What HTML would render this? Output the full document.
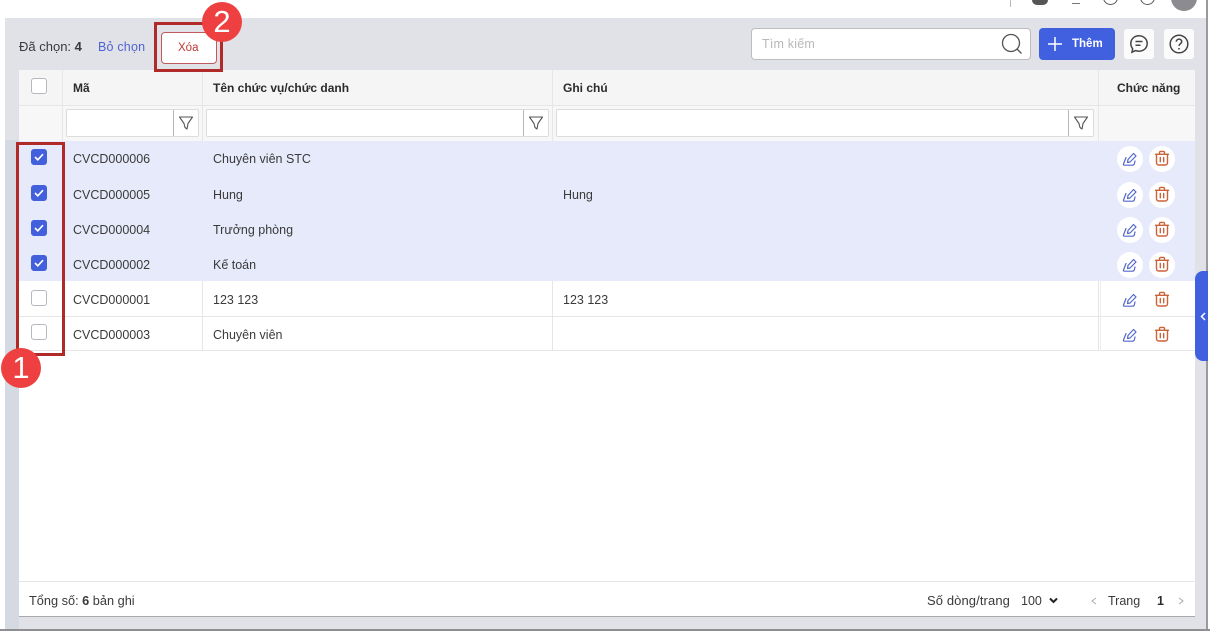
<!DOCTYPE html>
<html><head><meta charset="utf-8">
<style>
*{box-sizing:border-box}
html,body{margin:0;padding:0;width:1210px;height:631px;overflow:hidden;background:#fff;font-family:"Liberation Sans","Noto Sans CJK SC",sans-serif;font-size:12.5px;color:#3a3a3a}
.a{position:absolute}
.t{position:absolute;white-space:nowrap;line-height:16px}
.b{font-weight:700;color:#2b2b2b}
.hd{font-size:12px}
.cb{position:absolute;left:31px;width:16px;height:16px;border:1px solid #b5b8be;border-radius:3px;background:#fff}
.cb.on{background:#4360dc;border-color:#4360dc}
.cb.on svg{position:absolute;left:2px;top:3px}
.row{position:absolute;left:19px;width:1176px}
.sel{background:#e7eafa}
.v{position:absolute;width:1px;background:#e6e6e6}
.h{position:absolute;height:1px;background:#e6e6e6}
.inp{position:absolute;top:109px;height:28px;background:#fff;border:1px solid #dcdcdc;border-radius:2px}
.inp i{position:absolute;right:24px;top:0;bottom:0;width:1px;background:#b5b5b5}
.inp svg{position:absolute;right:4px;top:5px}
.circ{position:absolute;width:26px;height:26px;border-radius:50%;background:#fff}
.ic{position:absolute}
.red{position:absolute;border:3px solid #b02a2a}
.num{position:absolute;border-radius:50%;background:#ee4040;color:#fff;text-align:center;font-size:31px;width:40px;height:40px;line-height:40px}
</style></head><body>
<!-- top bar remnants -->
<div class="a" style="left:1010px;top:0;width:1px;height:7px;background:#bbb"></div>
<div class="a" style="left:1032px;top:0;width:16px;height:5px;background:#555;border-radius:0 0 8px 8px"></div>
<div class="a" style="left:1072px;top:0;width:8px;height:4px;border-bottom:1px solid #777"></div>
<div class="a" style="left:1103px;top:-10px;width:15px;height:15px;border:1.5px solid #555;border-radius:50%"></div>
<div class="a" style="left:1140px;top:-10px;width:15px;height:15px;border:1.5px solid #555;border-radius:50%"></div>
<div class="a" style="left:1171px;top:-15px;width:26px;height:26px;background:#8c8c90;border-radius:50%"></div>

<!-- gray area -->
<div class="a" style="left:5px;top:18px;width:1203px;height:611px;background:#e0e2e8"></div>
<div class="a" style="left:5px;top:140px;width:14px;height:489px;background:#d5d9e2"></div>
<div class="a" style="left:1206px;top:0;width:2px;height:631px;background:#9a9a9e"></div>
<div class="a" style="left:0;top:629px;width:1210px;height:2px;background:#8f8f92"></div>

<!-- toolbar -->
<div class="t" style="left:19px;top:39px;font-size:13px">Đã chọn: <b>4</b></div>
<div class="t" style="left:98px;top:39px;font-size:12.5px;letter-spacing:.2px;color:#4f63cf">Bỏ chọn</div>
<div class="a" style="left:161px;top:32px;width:56px;height:32px;background:#fff;border:1px solid #c05a5a;border-radius:4px"></div>
<div class="t" style="left:178px;top:40px;font-size:11.5px;color:#c0392f">Xóa</div>

<div class="a" style="left:751px;top:28px;width:280px;height:32px;background:#fff;border:1px solid #bdbdbd;border-radius:4px"></div>
<div class="t" style="left:762px;top:36px;font-size:12.5px;letter-spacing:.2px;color:#b8b8b8">Tìm kiếm</div>
<svg class="ic" style="left:1000px;top:32px" width="24" height="24" viewBox="0 0 24 24" fill="none" stroke="#555" stroke-width="1.300"><circle cx="11" cy="11" r="8.500"/><path d="M17 17l4.500 4.500"/></svg>
<div class="a" style="left:1039px;top:28px;width:76px;height:32px;background:#4160e0;border-radius:4px"></div>
<svg class="ic" style="left:1047px;top:36px" width="16" height="16" viewBox="0 0 16 16" stroke="#fff" stroke-width="1.500"><path d="M8 1v14M1 8h14"/></svg>
<div class="t b" style="left:1072px;top:36px;font-size:11.500px;color:#fff">Thêm</div>
<div class="a" style="left:1124px;top:29px;width:30px;height:30px;background:#fbfbfc;border-radius:3px"></div>
<svg class="ic" style="left:1129px;top:34px" width="20" height="20" viewBox="0 0 20 20" fill="none" stroke="#444" stroke-width="1.500"><path d="M10 1.800c4.700 0 8.200 3.300 8.200 7.700s-3.500 7.700-8.200 7.700c-1.200 0-2.400-.2-3.400-.6L3 18.200l.7-3.400C2.500 13.300 1.800 11.500 1.800 9.500 1.800 5.100 5.300 1.800 10 1.800z"/><path d="M6.500 7.500h7M6.500 11.300h5"/></svg>
<div class="a" style="left:1164px;top:29px;width:30px;height:30px;background:#fbfbfc;border-radius:3px"></div>
<svg class="ic" style="left:1169px;top:34px" width="20" height="20" viewBox="0 0 20 20" fill="none" stroke="#444" stroke-width="1.500"><circle cx="10" cy="10" r="8.800"/><path d="M7.300 7.800c0-1.600 1.200-2.700 2.700-2.700s2.700 1 2.700 2.500c0 2.200-2.700 2.300-2.700 4.300"/><path d="M10 14v1.500" stroke-width="1.600"/></svg>

<!-- table panel -->
<div class="a" style="left:19px;top:70px;width:1176px;height:547px;background:#fff;border-bottom:1px solid #aaa"></div>
<div class="a" style="left:19px;top:70px;width:1176px;height:35px;background:#f5f5f5"></div>
<div class="a" style="left:19px;top:106px;width:1176px;height:35px;background:#f7f7f7"></div>
<div class="h" style="left:19px;top:105px;width:1176px"></div>

<div class="row sel" style="top:141px;height:140px"></div>
<div class="h" style="left:19px;top:316px;width:1176px"></div>
<div class="h" style="left:19px;top:350px;width:1176px"></div>
<div class="h" style="left:19px;top:581px;width:1176px"></div>

<div class="v" style="left:62px;top:70px;height:71px"></div>
<div class="v" style="left:202px;top:70px;height:71px"></div>
<div class="v" style="left:552px;top:70px;height:71px"></div>
<div class="v" style="left:1098px;top:70px;height:71px"></div>
<div class="v" style="left:202px;top:281px;height:70px"></div>
<div class="v" style="left:552px;top:281px;height:70px"></div>
<div class="v" style="left:1098px;top:281px;height:70px"></div>
<div class="v" style="left:1100px;top:281px;height:70px;background:#eee"></div>

<!-- header -->
<div class="cb" style="top:78px"></div>
<div class="t b hd" style="left:73px;top:80px">Mã</div>
<div class="t b hd" style="left:213px;top:80px">Tên chức vụ/chức danh</div>
<div class="t b hd" style="left:563px;top:80px">Ghi chú</div>
<div class="t b hd" style="left:1117px;top:80px">Chức năng</div>

<!-- filters -->
<div class="inp" style="left:66px;width:133px"><i></i><svg width="16" height="16" viewBox="0 0 16 16" fill="none" stroke="#555" stroke-width="1.100"><path d="M1.500 2h13L10 8.500 9 14 7 12.500 6 8.500z" stroke-linejoin="round"/></svg></div>
<div class="inp" style="left:206px;width:343px"><i></i><svg width="16" height="16" viewBox="0 0 16 16" fill="none" stroke="#555" stroke-width="1.100"><path d="M1.500 2h13L10 8.500 9 14 7 12.500 6 8.500z" stroke-linejoin="round"/></svg></div>
<div class="inp" style="left:556px;width:538px"><i></i><svg width="16" height="16" viewBox="0 0 16 16" fill="none" stroke="#555" stroke-width="1.100"><path d="M1.500 2h13L10 8.500 9 14 7 12.500 6 8.500z" stroke-linejoin="round"/></svg></div>

<!-- checkboxes -->
<div class="cb on" style="top:149px"><svg width="10" height="8" viewBox="0 0 10 8" fill="none" stroke="#fff" stroke-width="1.600"><path d="M1 4l2.800 2.800L9 1.200"/></svg></div>
<div class="cb on" style="top:185px"><svg width="10" height="8" viewBox="0 0 10 8" fill="none" stroke="#fff" stroke-width="1.600"><path d="M1 4l2.800 2.800L9 1.200"/></svg></div>
<div class="cb on" style="top:220px"><svg width="10" height="8" viewBox="0 0 10 8" fill="none" stroke="#fff" stroke-width="1.600"><path d="M1 4l2.800 2.800L9 1.200"/></svg></div>
<div class="cb on" style="top:255px"><svg width="10" height="8" viewBox="0 0 10 8" fill="none" stroke="#fff" stroke-width="1.600"><path d="M1 4l2.800 2.800L9 1.200"/></svg></div>
<div class="cb" style="top:290px"></div>
<div class="cb" style="top:324px"></div>

<!-- rows -->
<div class="t" style="left:73px;top:151px">CVCD000006</div><div class="t" style="left:213px;top:151px">Chuyên viên STC</div>
<div class="t" style="left:73px;top:187px">CVCD000005</div><div class="t" style="left:213px;top:187px">Hung</div><div class="t" style="left:563px;top:187px">Hung</div>
<div class="t" style="left:73px;top:222px">CVCD000004</div><div class="t" style="left:213px;top:222px">Trưởng phòng</div>
<div class="t" style="left:73px;top:257px">CVCD000002</div><div class="t" style="left:213px;top:257px">Kế toán</div>
<div class="t" style="left:73px;top:292px">CVCD000001</div><div class="t" style="left:213px;top:292px">123 123</div><div class="t" style="left:563px;top:292px">123 123</div>
<div class="t" style="left:73px;top:327px">CVCD000003</div><div class="t" style="left:213px;top:327px">Chuyên viên</div>

<!-- action icons -->
<svg width="0" height="0" style="position:absolute"><defs>
<g id="ed" fill="none" stroke="#5468c8" stroke-width="1.200" stroke-linejoin="round" stroke-linecap="round"><path d="M6 8.500L11.500 2.500l2.500 2.500L8 11l-2.500.5z"/><path d="M4 6.500L1.500 13a.8.8 0 0 0 .8 1.200h8.200a2 2 0 0 0 1.800-1.200l.7-3"/></g>
<g id="tr" fill="none" stroke="#cc6238" stroke-width="1.400" stroke-linejoin="round" stroke-linecap="round"><path d="M1.500 4.300h13M5.500 4.300V2.600a1.200 1.200 0 0 1 1.200-1.200h2.600a1.200 1.200 0 0 1 1.200 1.200v1.700"/><path d="M2.500 4.300v8.400a2.300 2.300 0 0 0 2.300 2.300h6.400a2.300 2.300 0 0 0 2.300-2.300V4.300"/><path d="M6.300 7.500v4.300M9.700 7.500v4.300"/></g>
</defs></svg>
<div class="circ" style="left:1117px;top:146px"></div><div class="circ" style="left:1149px;top:146px"></div>
<div class="circ" style="left:1117px;top:182px"></div><div class="circ" style="left:1149px;top:182px"></div>
<div class="circ" style="left:1117px;top:217px"></div><div class="circ" style="left:1149px;top:217px"></div>
<div class="circ" style="left:1117px;top:252px"></div><div class="circ" style="left:1149px;top:252px"></div>
<svg class="ic" style="left:1122px;top:151px" width="16" height="16" viewBox="0 0 16 16"><use href="#ed"/></svg><svg class="ic" style="left:1154px;top:150px" width="16" height="17" viewBox="0 0 16 17"><use href="#tr"/></svg>
<svg class="ic" style="left:1122px;top:187px" width="16" height="16" viewBox="0 0 16 16"><use href="#ed"/></svg><svg class="ic" style="left:1154px;top:186px" width="16" height="17" viewBox="0 0 16 17"><use href="#tr"/></svg>
<svg class="ic" style="left:1122px;top:222px" width="16" height="16" viewBox="0 0 16 16"><use href="#ed"/></svg><svg class="ic" style="left:1154px;top:221px" width="16" height="17" viewBox="0 0 16 17"><use href="#tr"/></svg>
<svg class="ic" style="left:1122px;top:257px" width="16" height="16" viewBox="0 0 16 16"><use href="#ed"/></svg><svg class="ic" style="left:1154px;top:256px" width="16" height="17" viewBox="0 0 16 17"><use href="#tr"/></svg>
<svg class="ic" style="left:1122px;top:292px" width="16" height="16" viewBox="0 0 16 16"><use href="#ed"/></svg><svg class="ic" style="left:1154px;top:291px" width="16" height="17" viewBox="0 0 16 17"><use href="#tr"/></svg>
<svg class="ic" style="left:1122px;top:327px" width="16" height="16" viewBox="0 0 16 16"><use href="#ed"/></svg><svg class="ic" style="left:1154px;top:326px" width="16" height="17" viewBox="0 0 16 17"><use href="#tr"/></svg>

<!-- side tab -->
<div class="a" style="left:1195px;top:271px;width:13px;height:90px;background:#4160e0;border-radius:8px 0 0 8px"></div>
<svg class="ic" style="left:1200px;top:312px" width="7" height="9" viewBox="0 0 7 9" fill="none" stroke="#fff" stroke-width="1.500"><path d="M5 1L1.500 4.500 5 8"/></svg>

<!-- footer -->
<div class="t" style="left:29px;top:593px;font-size:12.75px">Tổng số: <b>6</b> bản ghi</div>
<div class="t" style="left:927px;top:593px;font-size:13px;letter-spacing:.1px">Số dòng/trang</div>
<div class="t" style="left:1021px;top:593px;font-size:12.500px">100</div>
<svg class="ic" style="left:1049px;top:597px" width="9" height="7" viewBox="0 0 9 7" fill="none" stroke="#222" stroke-width="2"><path d="M1 1.500l3.500 3.500L8 1.500"/></svg>
<svg class="ic" style="left:1091px;top:597px" width="6" height="8" viewBox="0 0 6 8" fill="none" stroke="#aaa" stroke-width="1"><path d="M5 1L1 4l4 3"/></svg>
<div class="t" style="left:1108px;top:593px;font-size:12.500px">Trang</div>
<div class="t b" style="left:1157px;top:593px;font-size:12.500px">1</div>
<svg class="ic" style="left:1178px;top:597px" width="6" height="8" viewBox="0 0 6 8" fill="none" stroke="#aaa" stroke-width="1"><path d="M1 1l4 3-4 3"/></svg>

<!-- annotations -->
<div class="red" style="left:16px;top:142px;width:49px;height:214px"></div>
<div class="red" style="left:154px;top:22px;width:69px;height:50px"></div>
<div class="num" style="left:1px;top:348px">1</div>
<div class="num" style="left:202px;top:2px">2</div>
</body></html>
